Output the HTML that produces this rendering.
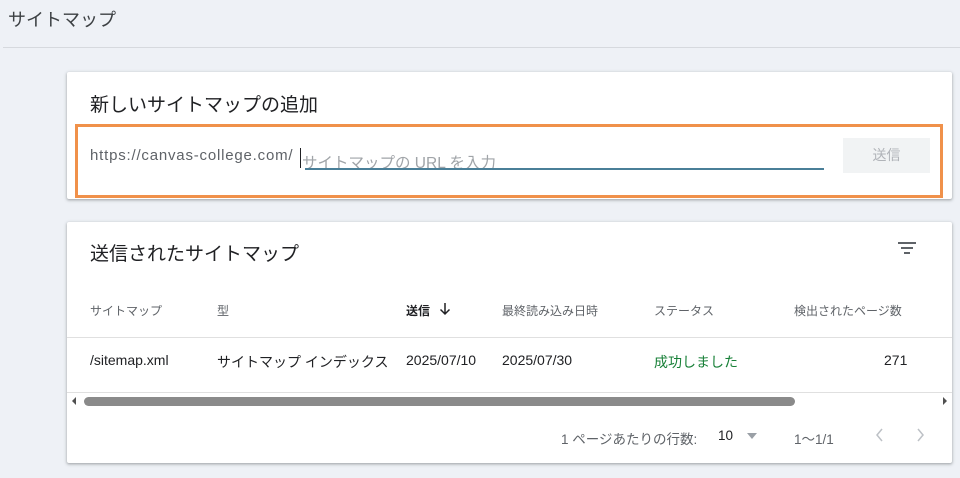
<!DOCTYPE html>
<html><head><meta charset="utf-8"><style>
*{box-sizing:border-box;margin:0;padding:0}
body{width:960px;height:478px;background:#eef1f6;font-family:"Liberation Sans","Noto Sans CJK JP",sans-serif;position:relative;overflow:hidden;color:#202124}
.abs{position:absolute;white-space:nowrap}
.card{position:absolute;background:#fff;box-shadow:0 1px 2px rgba(60,64,67,.3),0 1px 3px 1px rgba(60,64,67,.15);border-radius:2px}
.th{position:absolute;top:302px;font-size:12px;color:#5f6368}
.td{position:absolute;top:352px;font-size:14px;color:#202124}
</style></head><body>
<div class="abs" style="left:8px;top:6px;font-size:18px;color:#3c4043">サイトマップ</div>
<div class="abs" style="left:3px;top:47px;width:957px;height:1px;background:#d6d9de"></div>

<div class="card" style="left:67px;top:72px;width:885px;height:127px"></div>
<div class="abs" style="left:90px;top:90px;font-size:19px;color:#202124">新しいサイトマップの追加</div>
<div class="abs" style="left:75px;top:124px;width:868px;height:74px;border:3px solid #f0914a"></div>
<div class="abs" style="left:90px;top:147px;font-size:15px;letter-spacing:0.8px;color:#5f6368">https://canvas-college.com/</div>
<div class="abs" style="left:300px;top:148px;width:1px;height:20px;background:#202124"></div>
<div class="abs" style="left:302px;top:151px;font-size:15.5px;color:#a0a4a8">サイトマップの URL を入力</div>
<div class="abs" style="left:305px;top:168px;width:519px;height:2px;background:#4a7f98"></div>
<div class="abs" style="left:843px;top:138px;width:87px;height:35px;background:#f1f3f4;color:#b0b3b8;font-size:14px;text-align:center;line-height:35px">送信</div>

<div class="card" style="left:67px;top:222px;width:885px;height:241px"></div>
<div class="abs" style="left:90px;top:239px;font-size:19px">送信されたサイトマップ</div>
<svg class="abs" style="left:897px;top:240px" width="20" height="16"><path d="M1 3h18M4 8h12M7 13h6" stroke="#5f6368" stroke-width="2"/></svg>
<div class="th" style="left:90px">サイトマップ</div>
<div class="th" style="left:217px">型</div>
<div class="th" style="left:406px;color:#202124;font-weight:bold">送信</div>
<svg class="abs" style="left:439px;top:302px" width="12" height="14"><path d="M6 1v11M1.5 7.5L6 12l4.5-4.5" stroke="#202124" stroke-width="1.5" fill="none"/></svg>
<div class="th" style="left:502px">最終読み込み日時</div>
<div class="th" style="left:654px">ステータス</div>
<div class="th" style="left:794px">検出されたページ数</div>
<div class="abs" style="left:67px;top:337px;width:885px;height:1px;background:#e0e0e0"></div>
<div class="td" style="left:90px">/sitemap.xml</div>
<div class="td" style="left:217px">サイトマップ インデックス</div>
<div class="td" style="left:406px">2025/07/10</div>
<div class="td" style="left:502px">2025/07/30</div>
<div class="td" style="left:654px;color:#188038">成功しました</div>
<div class="td" style="left:884px">271</div>
<div class="abs" style="left:67px;top:392px;width:885px;height:1px;background:#e0e0e0"></div>
<svg class="abs" style="left:71px;top:397px" width="6" height="8"><path d="M5 0v8L1 4z" fill="#505050"/></svg>
<div class="abs" style="left:84px;top:397px;width:711px;height:9px;border-radius:5px;background:#8a8a8a"></div>
<svg class="abs" style="left:942px;top:397px" width="6" height="8"><path d="M1 0v8l4-4z" fill="#505050"/></svg>
<div class="abs" style="left:561px;top:428px;font-size:13.5px;color:#5f6368">1 ページあたりの行数:</div>
<div class="abs" style="left:718px;top:428px;font-size:13.5px;color:#202124">10</div>
<svg class="abs" style="left:746px;top:432px" width="12" height="8"><path d="M1 1h10L6 7z" fill="#9aa0a6"/></svg>
<div class="abs" style="left:794px;top:428px;font-size:13.5px;color:#5f6368">1〜1/1</div>
<svg class="abs" style="left:874px;top:427px" width="10" height="16"><path d="M8 2L3 8l5 6" stroke="#bdc1c6" stroke-width="1.5" fill="none"/></svg>
<svg class="abs" style="left:916px;top:427px" width="10" height="16"><path d="M2 2l5 6-5 6" stroke="#bdc1c6" stroke-width="1.5" fill="none"/></svg>
</body></html>
